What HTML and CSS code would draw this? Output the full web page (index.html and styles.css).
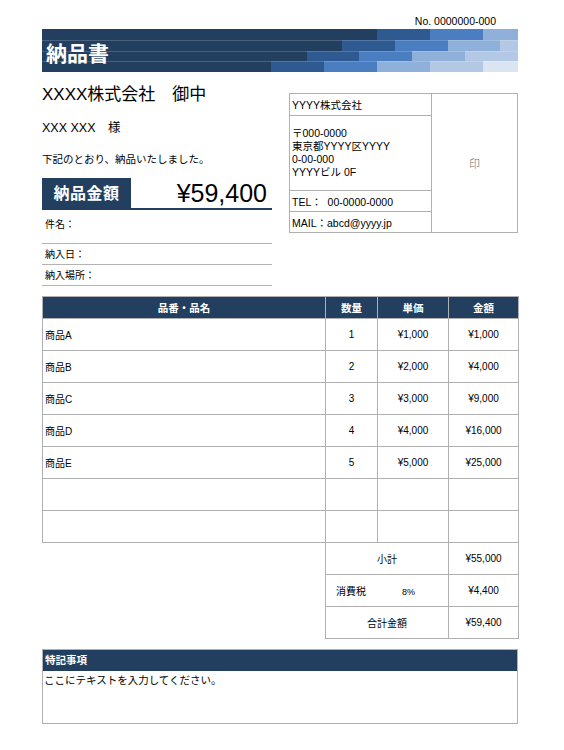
FILE: index.html
```html
<!DOCTYPE html>
<html lang="ja">
<head>
<meta charset="utf-8">
<title>納品書</title>
<link rel="stylesheet" href="styles.css">
</head>
<body>
<div class="page">
  <div class="docno">No. 0000000-000</div>
  <div class="banner">
    <div class="stripes">
      <div class="srow r1"><span class="k1"></span><span class="k2"></span><span class="k3"></span><span class="k4"></span></div>
      <div class="srow r2"><span class="k1"></span><span class="k2"></span><span class="k3"></span><span class="k4"></span><span class="k5"></span></div>
      <div class="srow r3"><span class="k1"></span><span class="k2"></span><span class="k3"></span><span class="k4"></span><span class="k5"></span></div>
      <div class="srow r4"><span class="k1"></span><span class="k2"></span><span class="k3"></span><span class="k4"></span><span class="k5"></span><span class="k6"></span></div>
    </div>
    <h1 class="title">納品書</h1>
  </div>

  <div class="top">
    <div class="left">
      <div class="client">XXXX株式会社　御中</div>
      <div class="person">XXX XXX　様</div>
      <div class="lead">下記のとおり、納品いたしました。</div>
      <div class="amount">
        <div class="amount-label">納品金額</div>
        <div class="amount-value">¥59,400</div>
      </div>
      <div class="field field-first">件名：</div>
      <div class="field">納入日：</div>
      <div class="field">納入場所：</div>
    </div>
    <div class="issuer">
      <div class="cell name">YYYY株式会社</div>
      <div class="cell addr">〒000-0000<br>東京都YYYY区YYYY<br>0-00-000<br>YYYYビル 0F</div>
      <div class="cell tel">TEL：&nbsp;&nbsp;00-0000-0000</div>
      <div class="cell mail">MAIL：abcd@yyyy.jp</div>
      <div class="stamp">印</div>
    </div>
  </div>

  <table class="items">
    <colgroup>
      <col class="c-name"><col class="c-qty"><col class="c-price"><col class="c-amt">
    </colgroup>
    <thead>
      <tr><th>品番・品名</th><th>数量</th><th>単価</th><th>金額</th></tr>
    </thead>
    <tbody>
      <tr><td class="nm">商品A</td><td>1</td><td>¥1,000</td><td>¥1,000</td></tr>
      <tr><td class="nm">商品B</td><td>2</td><td>¥2,000</td><td>¥4,000</td></tr>
      <tr><td class="nm">商品C</td><td>3</td><td>¥3,000</td><td>¥9,000</td></tr>
      <tr><td class="nm">商品D</td><td>4</td><td>¥4,000</td><td>¥16,000</td></tr>
      <tr><td class="nm">商品E</td><td>5</td><td>¥5,000</td><td>¥25,000</td></tr>
      <tr><td class="nm"></td><td></td><td></td><td></td></tr>
      <tr><td class="nm"></td><td></td><td></td><td></td></tr>
      <tr class="sum"><td class="blank"></td><td colspan="2">小計</td><td>¥55,000</td></tr>
      <tr class="sum"><td class="blank"></td><td colspan="2" class="tax"><span class="tax-l">消費税</span><span class="tax-r">8%</span></td><td>¥4,400</td></tr>
      <tr class="sum"><td class="blank"></td><td colspan="2">合計金額</td><td>¥59,400</td></tr>
    </tbody>
  </table>

  <div class="notes">
    <div class="notes-head">特記事項</div>
    <div class="notes-body">ここにテキストを入力してください。</div>
  </div>
</div>
</body>
</html>
```

FILE: styles.css
```css
* { box-sizing: border-box; }
html, body { margin: 0; padding: 0; background: #fff; }
body {
  font-family: "Liberation Sans", "Noto Sans CJK JP", sans-serif;
  color: #000;
  width: 564px;
  height: 750px;
}
.page {
  padding: 14px 46px 0 42px;
}
.docno {
  text-align: right;
  font-size: 10.5px;
  line-height: 15px;
  padding-right: 22px;
}
.banner {
  display: grid;
  width: 476px;
  height: 43px;
}
.stripes, .title { grid-area: 1 / 1; }
.stripes {
  display: grid;
  grid-template-rows: 11px 11px 10px 11px;
}
.srow { display: grid; }
.srow span { display: block; border-top: 1px solid rgba(255,255,255,0.18); }
.srow.r1 span { border-top: none; }
.r1 { grid-template-columns: 335px 53px 53px 35px; }
.r2 { grid-template-columns: 300px 53px 53px 52px 18px; }
.r3 { grid-template-columns: 265px 52px 53px 53px 53px; }
.r4 { grid-template-columns: 229px 53px 53px 53px 53px 35px; }
.k1 { background: #223f60; }
.k2 { background: #2e5a91; }
.k3 { background: #4a7ec1; }
.k4 { background: #8fb0d9; }
.k5 { background: #b3c8e5; }
.k6 { background: #dbe4f1; }
.title {
  margin: 0;
  align-self: center;
  padding-left: 4px;
  color: #fff;
  font-size: 21px;
  line-height: 24px;
  font-weight: bold;
  font-family: "Noto Sans CJK JP", sans-serif;
  position: relative;
  top: 1px;
}

.top {
  display: flex;
  gap: 17px;
}
.left { width: 230px; }
.client {
  margin-top: 13px;
  font-size: 17px;
  line-height: 20px;
}
.person {
  margin-top: 15px;
  font-size: 12.5px;
  line-height: 16px;
}
.lead {
  margin-top: 16px;
  font-size: 10.5px;
  line-height: 14px;
}
.amount {
  margin-top: 12px;
  display: flex;
  height: 32px;
}
.amount-label {
  width: 89px;
  background: #223f60;
  color: #fff;
  font-size: 16px;
  font-weight: bold;
  line-height: 32px;
  text-align: center;
  letter-spacing: 0.5px;
}
.amount-value {
  flex: 1;
  text-align: right;
  font-size: 25px;
  line-height: 30px;
  padding-right: 5px;
  border-bottom: 2px solid #223f60;
}
.field {
  font-size: 10px;
  line-height: 18px;
  padding: 2px 0 0 3px;
  border-bottom: 1px solid #b3b3b3;
}
.field-first {
  margin-top: 6px;
  padding: 0 0 9px 3px;
}

.issuer {
  margin-top: 21px;
  width: 229px;
  height: 140px;
  display: grid;
  grid-template-columns: 142px 1fr;
  grid-template-rows: 22px 75px 21px 1fr;
  border: 1px solid #b0b0b0;
  font-size: 10.5px;
}
.cell {
  grid-column: 1;
  padding-left: 2px;
  border-right: 1px solid #b0b0b0;
  border-bottom: 1px solid #b0b0b0;
  display: flex;
  align-items: center;
}
.cell.mail { border-bottom: none; }
.addr {
  align-items: flex-start;
  padding-top: 11px;
  line-height: 13px;
}
.stamp {
  grid-column: 2;
  grid-row: 1 / 5;
  display: flex;
  align-items: center;
  justify-content: center;
  color: #9a9a9a;
  font-size: 11px;
}

.items {
  margin-top: 10px;
  width: 476px;
  border-collapse: collapse;
  table-layout: fixed;
  font-size: 10px;
}
.c-name { width: 283px; }
.c-qty { width: 52px; }
.c-price { width: 71px; }
.c-amt { width: 70px; }
.items th {
  background: #223f60;
  color: #fff;
  font-weight: bold;
  height: 22px;
  padding: 0;
  font-size: 10.5px;
  border: 1px solid #b0b0b0;
}
.items td {
  height: 32px;
  padding: 0;
  text-align: center;
  border: 1px solid #b0b0b0;
}
.items td.nm { text-align: left; padding-left: 2px; }
.items td.blank { border: none; }
.items td.tax { text-align: left; padding-left: 10px; }
.tax-r { margin-left: 36px; font-size: 9px; }

.notes {
  margin-top: 10px;
  width: 476px;
  border: 1px solid #b0b0b0;
}
.notes-head {
  background: #223f60;
  color: #fff;
  font-weight: bold;
  font-size: 10.5px;
  line-height: 21px;
  padding-left: 2px;
}
.notes-body {
  height: 52px;
  font-size: 10.5px;
  line-height: 16px;
  padding-left: 1px;
  padding-top: 1px;
}
```
